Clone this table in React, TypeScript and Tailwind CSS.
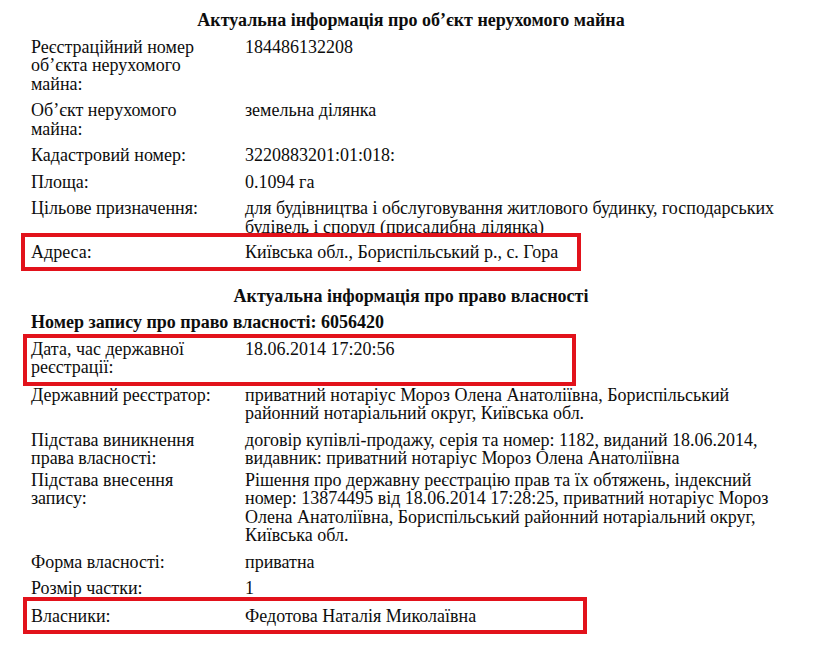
import React from "react";

type Row = {
  label: string[];
  value: string[];
  gap?: string;
  box?: string;
};

function Field({ row }: { row: Row }) {
  return (
    <div className={`relative flex ${row.gap ?? "mt-[8px]"}`}>
      <div className="w-[214px] shrink-0">
        {row.label.map((l, i) => (
          <div key={i} className="whitespace-nowrap">{l}</div>
        ))}
      </div>
      <div>
        {row.value.map((l, i) => (
          <div key={i} className="whitespace-nowrap">{l}</div>
        ))}
      </div>
      {row.box && <div className={`absolute border-[4px] border-[#e2121b] ${row.box}`} />}
    </div>
  );
}

const part1: Row[] = [
  { label: ["Реєстраційний номер", "об’єкта нерухомого", "майна:"], value: ["184486132208"] },
  { label: ["Об’єкт нерухомого", "майна:"], value: ["земельна ділянка"] },
  { label: ["Кадастровий номер:"], value: ["3220883201:01:018:"] },
  { label: ["Площа:"], value: ["0.1094 га"] },
  {
    label: ["Цільове призначення:"],
    value: ["для будівництва і обслуговування житлового будинку, господарських", "будівель і споруд (присадибна ділянка)"],
  },
  {
    label: ["Адреса:"],
    value: ["Київська обл., Бориспільський р., с. Гора"],
    gap: "mt-[7px]",
    box: "-top-[10px] -bottom-[9px] -left-[10px] w-[560px]",
  },
];

const part2: Row[] = [
  {
    label: ["Дата, час державної", "реєстрації:"],
    value: ["18.06.2014 17:20:56"],
    box: "-top-[6px] -bottom-[9px] -left-[8px] w-[553px]",
  },
  {
    label: ["Державний реєстратор:"],
    value: ["приватний нотаріус Мороз Олена Анатоліївна, Бориспільський", "районний нотаріальний округ, Київська обл."],
    gap: "mt-[9px]",
  },
  {
    label: ["Підстава виникнення", "права власності:"],
    value: ["договір купівлі-продажу, серія та номер: 1182, виданий 18.06.2014,", "видавник: приватний нотаріус Мороз Олена Анатоліївна"],
  },
  {
    label: ["Підстава внесення", "запису:"],
    value: [
      "Рішення про державну реєстрацію прав та їх обтяжень, індексний",
      "номер: 13874495 від 18.06.2014 17:28:25, приватний нотаріус Мороз",
      "Олена Анатоліївна, Бориспільський районний нотаріальний округ,",
      "Київська обл.",
    ],
    gap: "mt-[3px]",
  },
  { label: ["Форма власності:"], value: ["приватна"], gap: "mt-[8px]" },
  { label: ["Розмір частки:"], value: ["1"] },
  {
    label: ["Власники:"],
    value: ["Федотова Наталія Миколаївна"],
    gap: "mt-[9px]",
    box: "-top-[10px] -bottom-[9px] -left-[8px] w-[564px]",
  },
];

export default function App() {
  return (
    <div className="w-[820px] h-[660px] bg-white text-[#0d0d0d] text-[18px] leading-[18.5px] pt-[11px] overflow-hidden font-['Liberation_Serif','Times_New_Roman',serif]">
      <div className="text-center font-bold pl-[2px]">Актуальна інформація про об’єкт нерухомого майна</div>
      <div className="pl-[31px] pt-[0px]">
        {part1.map((r, i) => (
          <Field key={i} row={r} />
        ))}
      </div>
      <div className="text-center font-bold mt-[25.5px] pl-[2px]">Актуальна інформація про право власності</div>
      <div className="pl-[31px] font-bold mt-[7.5px]">Номер запису про право власності: 6056420</div>
      <div className="pl-[31px]">
        {part2.map((r, i) => (
          <Field key={i} row={r} />
        ))}
      </div>
    </div>
  );
}
